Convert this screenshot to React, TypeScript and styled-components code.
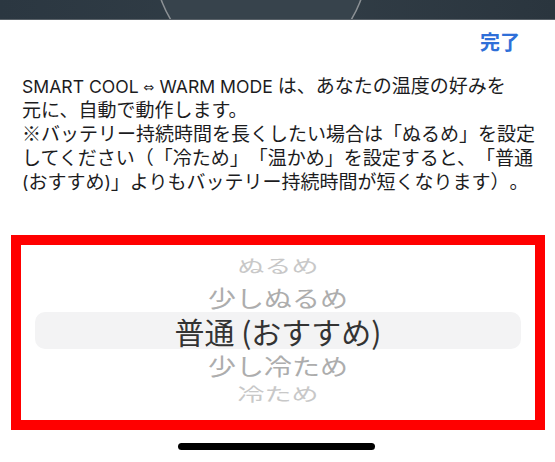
import React from 'react';
import styled, { createGlobalStyle } from 'styled-components';

const GlobalStyle = createGlobalStyle`
  html, body {
    margin: 0;
    padding: 0;
    background: #ffffff;
  }
  body {
    width: 555px;
    height: 462px;
    overflow: hidden;
    font-family: Inter, 'Noto Sans CJK JP', sans-serif;
  }
`;

type Tone = 'far' | 'near' | 'selected';

const options: { label: string; tone: Tone; height: number }[] = [
  { label: 'ぬるめ', tone: 'far', height: 31 },
  { label: '少しぬるめ', tone: 'near', height: 31 },
  { label: '普通 (おすすめ)', tone: 'selected', height: 37 },
  { label: '少し冷ため', tone: 'near', height: 32 },
  { label: '冷ため', tone: 'far', height: 24 },
];

const App: React.FC = () => {
  return (
    <Page>
      <GlobalStyle />
      <TopBar>
        <svg width="555" height="19" viewBox="0 0 555 19">
          <defs>
            <linearGradient id="bar" x1="0" x2="1" y1="0" y2="0">
              <stop offset="0" stopColor="#2b3741" />
              <stop offset="0.5" stopColor="#323e47" />
              <stop offset="1" stopColor="#2a353e" />
            </linearGradient>
          </defs>
          <rect x="0" y="0" width="555" height="19" fill="url(#bar)" />
          <circle cx="261" cy="-36" r="106" fill="#37434c" stroke="#8c9195" strokeWidth="1.5" />
        </svg>
      </TopBar>
      <Header>
        <DoneButton>完了</DoneButton>
      </Header>
      <Description>
        <Line>
          <Latin>SMART COOL <Arrow>⇔</Arrow> WARM MODE </Latin>は、あなたの温度の好みを
        </Line>
        <Line>元に、自動で動作します。</Line>
        <Line>※バッテリー持続時間を長くしたい場合は「ぬるめ」を設定</Line>
        <Line>してください（「冷ため」「温かめ」を設定すると、「普通</Line>
        <Line>
          <Latin>(</Latin>おすすめ<Latin>)</Latin>」よりもバッテリー持続時間が短くなります）。
        </Line>
      </Description>
      <PickerFrame>
        <Wheel>
          {options.map((o) => (
            <Row key={o.label} $tone={o.tone} $h={o.height}>
              <Label $tone={o.tone}>{o.label}</Label>
            </Row>
          ))}
        </Wheel>
      </PickerFrame>
      <HomeIndicator />
    </Page>
  );
};

export default App;

const Page = styled.div`
  display: flex;
  flex-direction: column;
  width: 555px;
  height: 462px;
  background: #ffffff;
`;

const TopBar = styled.div`
  height: 19px;
  border-bottom: 1px solid #596168;
  overflow: hidden;
  line-height: 0;
`;

const Header = styled.div`
  display: flex;
  justify-content: flex-end;
  align-items: center;
  height: 44px;
  padding-right: 35px;
`;

const DoneButton = styled.button`
  border: none;
  background: none;
  padding: 0;
  font-family: 'Noto Sans CJK JP', sans-serif;
  font-size: 20px;
  font-weight: 700;
  color: #2f6fd8;
  line-height: 1;
`;

const Description = styled.div`
  margin-top: 9px;
  padding-left: 22px;
  color: #1c1c1e;
  font-family: 'Noto Sans CJK JP', sans-serif;
  font-size: 19px;
  line-height: 24px;
  text-spacing-trim: space-all;
`;

const Line = styled.div`
  white-space: nowrap;
  height: 24px;
`;

const Latin = styled.span`
  font-family: Inter, 'Noto Sans CJK JP', sans-serif;
  font-size: 17.6px;
`;

const Arrow = styled.span`
  font-family: 'DejaVu Sans', sans-serif;
  font-size: 13px;
  vertical-align: 1px;
`;

const PickerFrame = styled.div`
  margin: 42px 10px 0 11px;
  height: 175px;
  border: 10px solid #ff0000;
`;

const Wheel = styled.div`
  display: flex;
  flex-direction: column;
  padding: 5px 14px 0;
`;

const Row = styled.div<{ $tone: Tone; $h: number }>`
  height: ${(p) => p.$h}px;
  display: flex;
  align-items: center;
  justify-content: center;
  border-radius: 10px;
  background: ${(p) => (p.$tone === 'selected' ? '#f3f3f4' : 'transparent')};
`;

const Label = styled.span<{ $tone: Tone }>`
  display: inline-block;
  font-family: 'Noto Sans CJK JP', sans-serif;
  white-space: pre;
  line-height: 1;
  font-size: ${(p) => (p.$tone === 'selected' ? 30 : p.$tone === 'near' ? 28 : 27)}px;
  color: ${(p) => (p.$tone === 'selected' ? '#333333' : p.$tone === 'near' ? '#adadad' : '#c8c8c8')};
  transform: scaleY(${(p) => (p.$tone === 'selected' ? 1 : p.$tone === 'near' ? 0.8 : 0.68)});
`;

const HomeIndicator = styled.div`
  align-self: center;
  margin: 13px 0 0 -2px;
  width: 197px;
  height: 7px;
  border-radius: 4px;
  background: #000000;
`;
